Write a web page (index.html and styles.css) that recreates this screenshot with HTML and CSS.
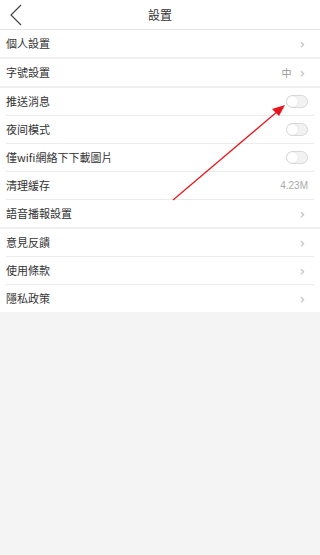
FILE: index.html
```html
<!DOCTYPE html>
<html>
<head>
<meta charset="utf-8">
<link rel="stylesheet" href="styles.css">
</head>
<body>
<div class="page">
  <header class="topbar">
    <svg class="back" width="14" height="22" viewBox="0 0 14 22"><path d="M12 1 L2 11 L12 21" fill="none" stroke="#444" stroke-width="1.2"/></svg>
    <div class="title">設置</div>
  </header>
  <div class="group">
    <div class="row"><span class="label">個人設置</span><span class="chev">›</span></div>
  </div>
  <div class="group">
    <div class="row"><span class="label">字號設置</span><span class="right"><span class="val">中</span><span class="chev">›</span></span></div>
  </div>
  <div class="group">
    <div class="row"><span class="label">推送消息</span><span class="toggle"></span></div>
    <div class="row"><span class="label">夜间模式</span><span class="toggle"></span></div>
    <div class="row"><span class="label">僅wifi網絡下下載圖片</span><span class="toggle"></span></div>
    <div class="row"><span class="label">清理緩存</span><span class="val num">4.23M</span></div>
    <div class="row"><span class="label">語音播報設置</span><span class="chev">›</span></div>
  </div>
  <div class="group">
    <div class="row"><span class="label">意見反饋</span><span class="chev">›</span></div>
    <div class="row"><span class="label">使用條款</span><span class="chev">›</span></div>
    <div class="row"><span class="label">隱私政策</span><span class="chev">›</span></div>
  </div>
  <svg class="arrow" width="320" height="555" viewBox="0 0 320 555">
    <line x1="173" y1="200" x2="278" y2="111" stroke="#e8141b" stroke-width="1.2"/>
    <polygon points="285,105 272,109 279,116" fill="#e8141b"/>
  </svg>
</div>
</body>
</html>
```
FILE: styles.css
```css
html, body { margin: 0; padding: 0; }
body {
  background: #f4f4f4;
  font-family: "Noto Sans CJK TC", "Noto Sans", sans-serif;
  color: #333;
}
.page { position: relative; width: 320px; height: 555px; overflow: hidden; }
.topbar {
  height: 29px;
  background: #fff;
  border-bottom: 1px solid #e6e6e6;
  display: flex;
  align-items: center;
  justify-content: center;
  position: relative;
}
.back { position: absolute; left: 9px; top: 4px; }
.title { font-size: 12px; color: #333; }
.group { background: #fff; border-bottom: 2px solid #f0f0f0; }
.group:last-of-type { border-bottom: none; }
.row {
  height: 27px;
  margin: 0 6px;
  display: flex;
  align-items: center;
  justify-content: space-between;
  border-bottom: 1px solid #ebebeb;
  font-size: 11px;
}
.row .label { position: relative; top: -1px; }
.group .row:last-child { border-bottom: none; }
.label { color: #333; }
.right { display: flex; align-items: center; gap: 8px; }
.val { color: #999; font-size: 10px; }
.num { font-family: "Liberation Sans", sans-serif; color: #aaa; margin-right: 6px; }
.chev { color: #bbb; font-size: 14px; font-family: "DejaVu Sans", sans-serif; margin-right: 9px; line-height: 1; }
.toggle {
  width: 20px; height: 11px;
  border: 1px solid #d8d8d8;
  border-radius: 7px;
  background: #f2f2f2;
  position: relative;
  margin-right: 6px;
}
.toggle::before {
  content: "";
  position: absolute;
  left: 0; top: 0;
  width: 11px; height: 11px;
  border-radius: 50%;
  background: #fff;
  box-shadow: 0 0 1px #bbb;
}
.arrow { position: absolute; left: 0; top: 0; pointer-events: none; }
```
